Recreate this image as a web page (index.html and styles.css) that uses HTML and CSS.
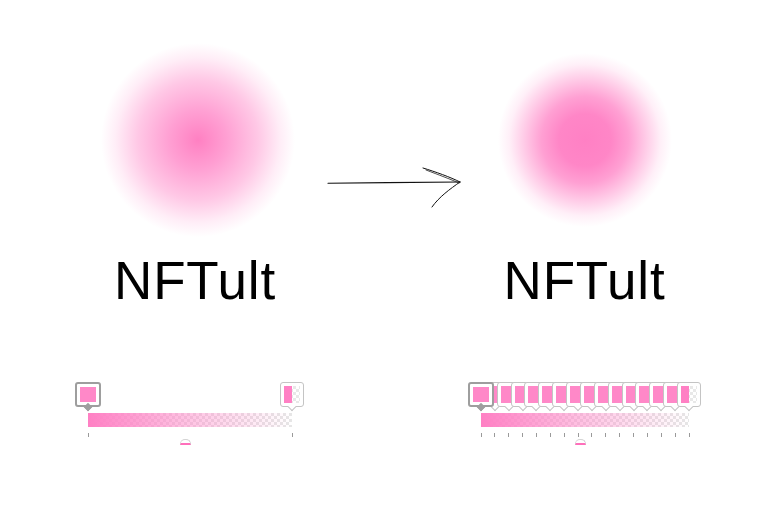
FILE: index.html
```html
<!DOCTYPE html>
<html>
<head>
<meta charset="utf-8">
<link rel="stylesheet" href="styles.css">
</head>
<body>
<div class="page">
  <div class="col col-left">
    <div class="glow-wrap"><div class="glow glow-linear"></div></div>
    <div class="title">NFTult</div>
    <div class="slider slider-left">
      <div class="stops">
        <div class="stop selected" style="left:0%;z-index:50"><div class="fill"></div></div>
        <div class="stop" style="left:100%;z-index:2"><div class="fill fill-half"></div></div>
      </div>
      <div class="bar"></div>
      <div class="ticks">
        <span class="tick" style="left:0%"></span>
        <span class="tick" style="left:100%"></span>
        <span class="mid" style="left:47%"></span>
      </div>
    </div>
  </div>
  <div class="col col-right">
    <div class="glow-wrap"><div class="glow glow-smooth"></div></div>
    <div class="title">NFTult</div>
    <div class="slider slider-right">
      <div class="stops">
        <div class="stop selected" style="left:0%;z-index:50"><div class="fill"></div></div>
        <div class="stop" style="left:6.667%;z-index:1"><div class="fill"></div></div>
        <div class="stop" style="left:13.333%;z-index:2"><div class="fill"></div></div>
        <div class="stop" style="left:20%;z-index:3"><div class="fill"></div></div>
        <div class="stop" style="left:26.667%;z-index:4"><div class="fill"></div></div>
        <div class="stop" style="left:33.333%;z-index:5"><div class="fill"></div></div>
        <div class="stop" style="left:40%;z-index:6"><div class="fill"></div></div>
        <div class="stop" style="left:46.667%;z-index:7"><div class="fill"></div></div>
        <div class="stop" style="left:53.333%;z-index:8"><div class="fill"></div></div>
        <div class="stop" style="left:60%;z-index:9"><div class="fill"></div></div>
        <div class="stop" style="left:66.667%;z-index:10"><div class="fill"></div></div>
        <div class="stop" style="left:73.333%;z-index:11"><div class="fill"></div></div>
        <div class="stop" style="left:80%;z-index:12"><div class="fill"></div></div>
        <div class="stop" style="left:86.667%;z-index:13"><div class="fill"></div></div>
        <div class="stop" style="left:93.333%;z-index:14"><div class="fill"></div></div>
        <div class="stop" style="left:100%;z-index:15"><div class="fill fill-half"></div></div>
      </div>
      <div class="bar"></div>
      <div class="ticks">
        <span class="tick" style="left:0%"></span>
        <span class="tick" style="left:6.667%"></span>
        <span class="tick" style="left:13.333%"></span>
        <span class="tick" style="left:20%"></span>
        <span class="tick" style="left:26.667%"></span>
        <span class="tick" style="left:33.333%"></span>
        <span class="tick" style="left:40%"></span>
        <span class="tick" style="left:46.667%"></span>
        <span class="tick" style="left:53.333%"></span>
        <span class="tick" style="left:60%"></span>
        <span class="tick" style="left:66.667%"></span>
        <span class="tick" style="left:73.333%"></span>
        <span class="tick" style="left:80%"></span>
        <span class="tick" style="left:86.667%"></span>
        <span class="tick" style="left:93.333%"></span>
        <span class="tick" style="left:100%"></span>
        <span class="mid" style="left:47%"></span>
      </div>
    </div>
  </div>
  <svg class="arrow" width="150" height="60" viewBox="0 0 150 60" xmlns="http://www.w3.org/2000/svg">
    <path d="M8 23.2 C50 22.8 100 22.4 140 22" fill="none" stroke="#111" stroke-width="1.1" stroke-linecap="round"/>
    <path d="M103 8 C116 12 130 17 140 22" fill="none" stroke="#111" stroke-width="1" stroke-linecap="round"/>
    <path d="M106 10 C119 15 130 19 139 23" fill="none" stroke="#222" stroke-width="0.8" stroke-linecap="round"/>
    <path d="M140 22 C130 29 119 37 112 47" fill="none" stroke="#111" stroke-width="1" stroke-linecap="round"/>
  </svg>
</div>
</body>
</html>
```
FILE: styles.css
```css
html, body {
  margin: 0;
  padding: 0;
  background: #ffffff;
}

.page {
  position: relative;
  width: 779px;
  height: 519px;
  display: grid;
  grid-template-columns: 390px 389px;
  font-family: "Liberation Sans", Arial, sans-serif;
}

.col {
  display: flex;
  flex-direction: column;
  align-items: center;
}

.glow-wrap {
  width: 200px;
  height: 200px;
  margin-top: 40px;
  display: flex;
  align-items: center;
  justify-content: center;
}

.col-left .glow-wrap {
  margin-left: 6px;
}

.glow {
  border-radius: 50%;
}

.glow-linear {
  width: 194px;
  height: 194px;
  background: radial-gradient(circle closest-side,
    rgba(255, 128, 194, 1) 0%,
    rgba(255, 136, 200, 0.8) 30%,
    rgba(255, 140, 202, 0.48) 62%,
    rgba(255, 145, 205, 0.16) 85%,
    rgba(255, 150, 210, 0) 100%);
}

.glow-smooth {
  width: 174px;
  height: 174px;
  background: radial-gradient(circle closest-side,
    rgba(255, 128, 196, 1) 0%,
    rgba(255, 130, 197, 0.97) 30%,
    rgba(255, 136, 200, 0.8) 50%,
    rgba(255, 140, 202, 0.45) 70%,
    rgba(255, 145, 205, 0.14) 87%,
    rgba(255, 150, 210, 0) 100%);
}

.title {
  margin-top: 11px;
  font-size: 53px;
  line-height: 60px;
  color: #000;
  letter-spacing: 0.8px;
}

.slider {
  position: relative;
  margin-top: 71px;
  align-self: flex-start;
}

.slider-left {
  width: 204px;
  margin-left: 88px;
}

.slider-right {
  width: 208px;
  margin-left: 91px;
}

.stops {
  position: relative;
  height: 28px;
}

.stop {
  position: absolute;
  top: 0;
  width: 24px;
  height: 25px;
  box-sizing: border-box;
  transform: translateX(-50%);
  background: #fff;
  border: 1px solid #c4c4c4;
  border-radius: 3px;
  padding: 3px;
}

.stop::after {
  content: "";
  position: absolute;
  left: 50%;
  bottom: -4px;
  width: 5px;
  height: 5px;
  margin-left: -3px;
  background: #fff;
  border-right: 1px solid #c4c4c4;
  border-bottom: 1px solid #c4c4c4;
  transform: rotate(45deg);
}

.stop.selected {
  width: 26px;
  border: 2px solid #9e9e9e;
  padding: 3px;
}

.stop.selected::after {
  bottom: -5px;
  background: #9e9e9e;
  border-color: #9e9e9e;
}

.fill {
  width: 100%;
  height: 100%;
  background: #ff88c8;
}

.fill-half {
  background:
    linear-gradient(to right, #ff80c4 50%, rgba(255, 255, 255, 0) 50%),
    conic-gradient(#e8e8e8 25%, #ffffff 0 50%, #e8e8e8 0 75%, #ffffff 0) 0 0 / 6px 6px;
}

.bar {
  height: 14px;
  margin-top: 3px;
  background:
    linear-gradient(to right, rgba(255, 128, 196, 1) 0%, rgba(255, 136, 200, 0.55) 45%, rgba(255, 140, 202, 0) 100%),
    conic-gradient(#e6e6e6 25%, #ffffff 0 50%, #e6e6e6 0 75%, #ffffff 0) 0 0 / 6px 6px;
}

.ticks {
  position: relative;
  height: 16px;
}

.tick {
  position: absolute;
  top: 6px;
  width: 1px;
  height: 4px;
  margin-left: -0.5px;
  background: #9a9a9a;
}

.mid {
  position: absolute;
  top: 12px;
  width: 9px;
  height: 3px;
  margin-left: -4px;
  border: 1px solid #d4d4d4;
  border-radius: 5px 5px 0 0;
  border-bottom: 2px solid #ff6fbb;
}

.arrow {
  position: absolute;
  left: 320px;
  top: 160px;
}
```
